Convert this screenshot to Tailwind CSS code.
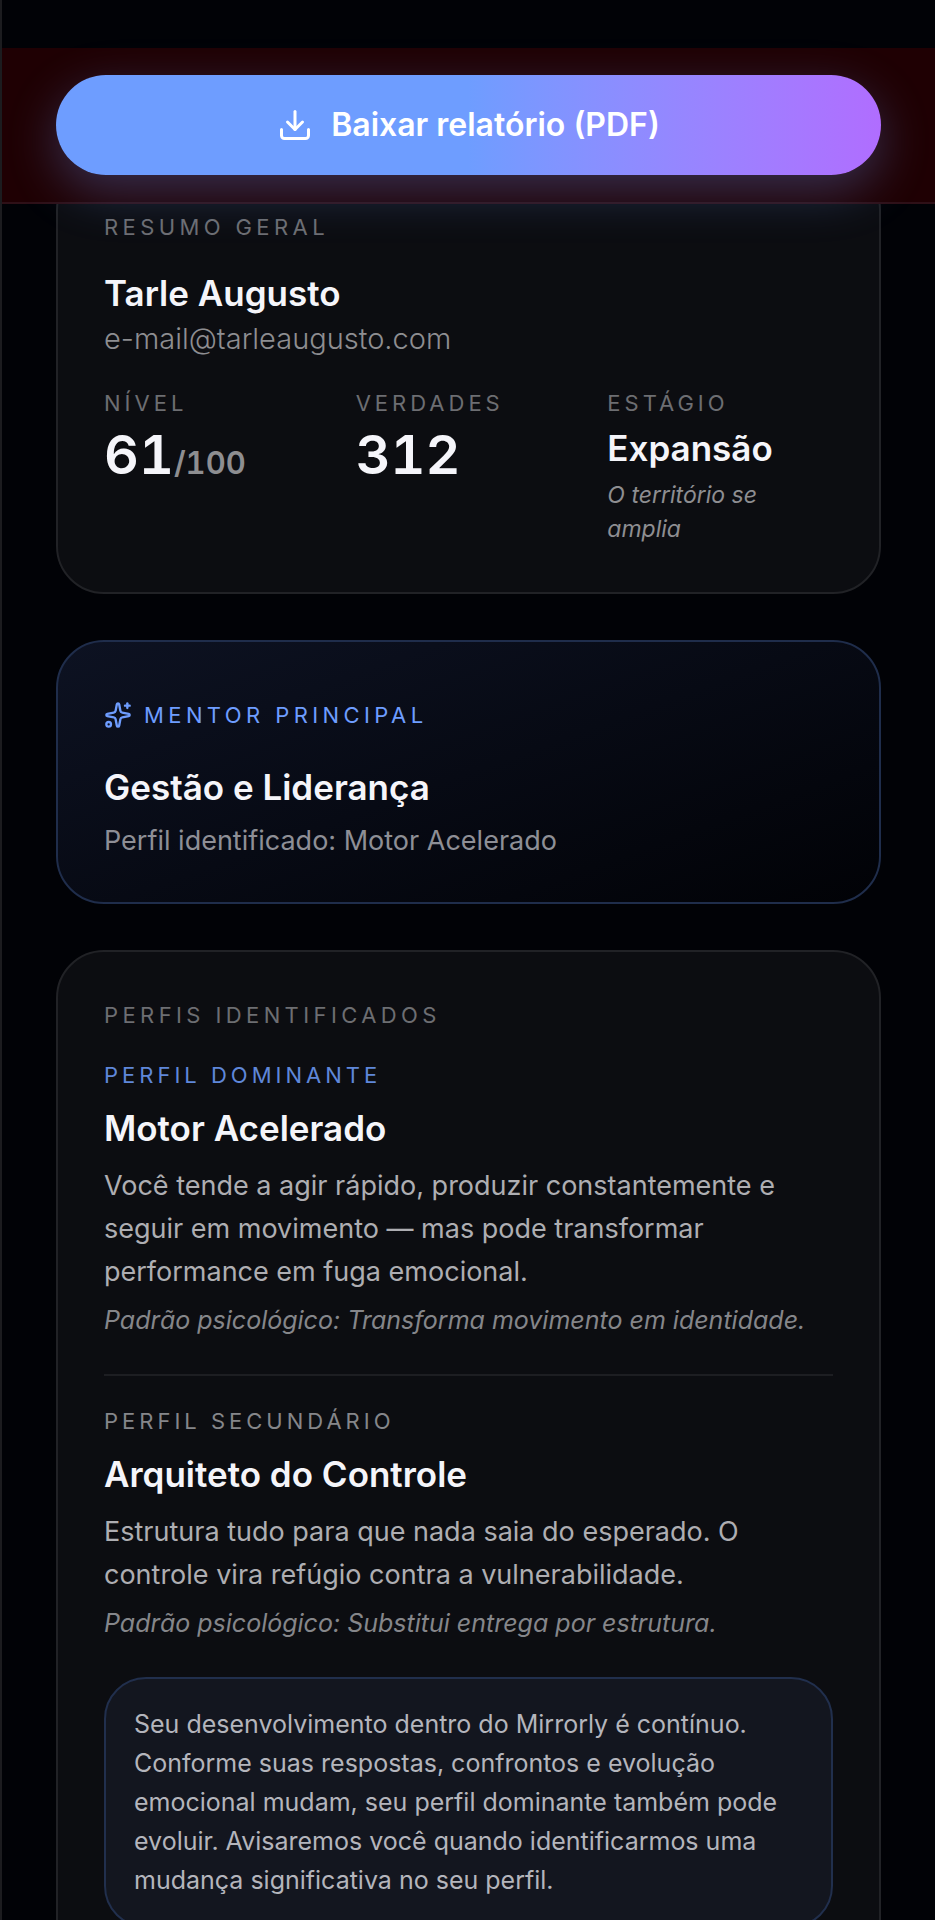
<!DOCTYPE html>
<html lang="pt-BR">
<head>
    <meta charset="UTF-8">
    <meta name="viewport" content="width=device-width, initial-scale=1.0">
    <title>Mirrorly - Relatório</title>
    <script src="https://cdn.jsdelivr.net/npm/@tailwindcss/browser@4"></script>
</head>
<body class="min-h-screen bg-[#010206] border-l-2 border-[#1c1c1f] pt-12 font-['Inter',sans-serif] text-[#f5f5fa]">

    <header class="relative z-10 bg-[#1f0003] border-b-2 border-[#2e1017] px-[54px] py-[27px]">
        <button type="button" class="w-full h-[100px] rounded-full flex items-center justify-center gap-[18px] text-[32px] font-semibold text-white bg-linear-to-r from-[#6e9dff] from-50% to-[#b06dff] shadow-[0_16px_50px_rgba(110,157,255,0.3)]">
            <svg class="size-9" viewBox="0 0 24 24" fill="none" stroke="currentColor" stroke-width="2" stroke-linecap="round" stroke-linejoin="round" aria-hidden="true">
                <path d="M12 15V3"/>
                <path d="M21 15v4a2 2 0 0 1-2 2H5a2 2 0 0 1-2-2v-4"/>
                <path d="m7 10 5 5 5-5"/>
            </svg>
            Baixar relatório (PDF)
        </button>
    </header>

    <main class="-mt-[42px] px-[54px] pb-12 flex flex-col gap-[46px]">

        <section class="bg-[#0c0d11] border-2 border-[#212226] rounded-[48px] p-[46px]">
            <h2 class="text-[22px] leading-[34px] tracking-[0.2em] text-[#6d6e72]">RESUMO GERAL</h2>
            <p class="mt-[27px] text-[35px] leading-[44px] font-semibold">Tarle Augusto</p>
            <p class="mt-0.5 text-[29px] leading-[43px] font-light text-[#8e8e91]">e-mail@tarleaugusto.com</p>

            <dl class="mt-[26px] grid grid-cols-3 gap-[26px]">
                <div>
                    <dt class="text-[22px] leading-[34px] tracking-[4px] text-[#6d6e72]">NÍVEL</dt>
                    <dd class="mt-1.5 text-[54px] leading-[58px] tabular-nums font-semibold">61<span class="text-[31px] text-[#8e8e91]">/100</span></dd>
                </div>
                <div>
                    <dt class="text-[22px] leading-[34px] tracking-[4px] text-[#6d6e72]">VERDADES</dt>
                    <dd class="mt-1.5 text-[54px] leading-[58px] tabular-nums font-semibold">312</dd>
                </div>
                <div>
                    <dt class="text-[22px] leading-[34px] tracking-[4px] text-[#6d6e72]">ESTÁGIO</dt>
                    <dd class="mt-1.5 text-[35px] leading-[44px] font-semibold">Expansão</dd>
                    <dd class="mt-2 text-[23px] leading-[34px] italic text-[#8e8e91]">O território se amplia</dd>
                </div>
            </dl>
        </section>

        <section class="bg-linear-160/srgb from-[#0d1222] to-[#010206] border-2 border-[#1f2d4b] rounded-[48px] px-[46px] pt-[56px] pb-10">
            <h2 class="flex items-center gap-3 text-[22px] leading-[34px] tracking-[0.2em] text-[#6e9dff]">
                <svg class="size-7" viewBox="0 0 24 24" fill="none" stroke="currentColor" stroke-width="2" stroke-linecap="round" stroke-linejoin="round" aria-hidden="true">
                    <path d="M11.017 2.814a1 1 0 0 1 1.966 0l1.051 5.558a2 2 0 0 0 1.594 1.594l5.558 1.051a1 1 0 0 1 0 1.966l-5.558 1.051a2 2 0 0 0-1.594 1.594l-1.051 5.558a1 1 0 0 1-1.966 0l-1.051-5.558a2 2 0 0 0-1.594-1.594l-5.558-1.051a1 1 0 0 1 0-1.966l5.558-1.051a2 2 0 0 0 1.594-1.594z"/>
                    <path d="M20 2v4"/>
                    <path d="M22 4h-4"/>
                    <circle cx="4" cy="20" r="2"/>
                </svg>
                MENTOR PRINCIPAL
            </h2>
            <p class="mt-[33px] text-[35px] leading-[44px] font-semibold">Gestão e Liderança</p>
            <p class="mt-2.5 text-[27px] leading-[43px] text-[#8e8f96]">Perfil identificado: Motor Acelerado</p>
        </section>

        <section class="bg-[#0c0d11] border-2 border-[#212226] rounded-[48px] p-[46px]">
            <h2 class="text-[22px] leading-[34px] tracking-[0.2em] text-[#6d6e72]">PERFIS IDENTIFICADOS</h2>

            <article class="mt-[26px]">
                <h3 class="text-[22px] leading-[34px] tracking-[4px] text-[#5f87d9]">PERFIL DOMINANTE</h3>
                <p class="mt-3.5 text-[35px] leading-[44px] font-semibold">Motor Acelerado</p>
                <p class="mt-3.5 text-[27px] leading-[43px] text-[#aeaeb2]">Você tende a agir rápido, produzir constantemente e seguir em movimento — mas pode transformar performance em fuga emocional.</p>
                <p class="mt-[7px] text-[25px] leading-[40px] italic text-[#85868a]">Padrão psicológico: Transforma movimento em identidade.</p>
            </article>

            <article class="mt-[34px] pt-7 border-t-2 border-[#1d1e22]">
                <h3 class="text-[22px] leading-[34px] tracking-[4px] text-[#85868a]">PERFIL SECUNDÁRIO</h3>
                <p class="mt-3.5 text-[35px] leading-[44px] font-semibold">Arquiteto do Controle</p>
                <p class="mt-3.5 text-[27px] leading-[43px] text-[#aeaeb2]">Estrutura tudo para que nada saia do esperado. O controle vira refúgio contra a vulnerabilidade.</p>
                <p class="mt-[7px] text-[25px] leading-[40px] italic text-[#85868a]">Padrão psicológico: Substitui entrega por estrutura.</p>
            </article>

            <p class="mt-[34px] bg-[#13161f] border-2 border-[#212f4d] rounded-[42px] px-7 py-[26px] text-[25px] leading-[39px] text-[#b4b5bc]">Seu desenvolvimento dentro do Mirrorly é contínuo. Conforme suas respostas, confrontos e evolução emocional mudam, seu perfil dominante também pode evoluir. Avisaremos você quando identificarmos uma mudança significativa no seu perfil.</p>
        </section>

    </main>

</body>
</html>
